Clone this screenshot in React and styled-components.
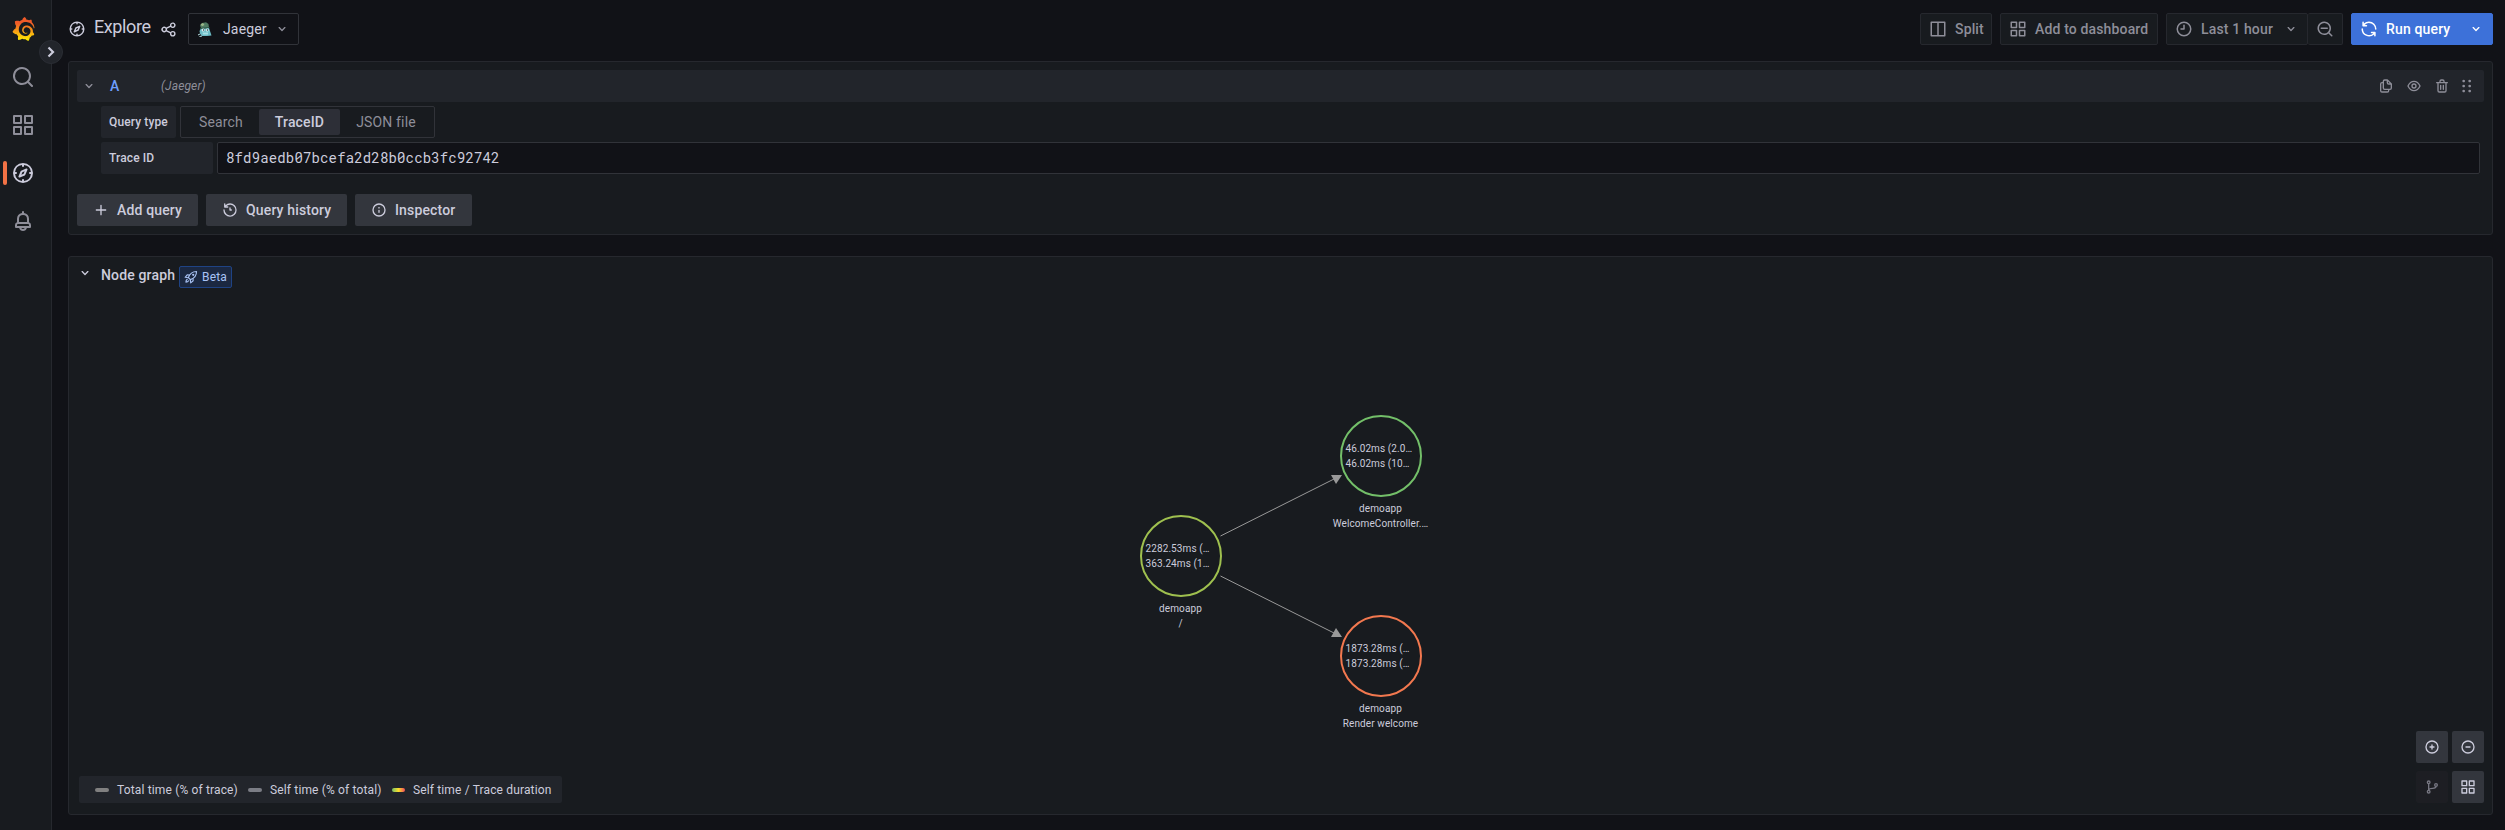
import React from "react";
import styled, { createGlobalStyle, css } from "styled-components";

const colors = {
  canvas: "#111217",
  primary: "#181b1f",
  secondary: "#22252b",
  border: "#26282e",
  strongBorder: "#313339",
  text: "#ccccdc",
  muted: "#8e8e99",
  button: "#33363d",
  blue: "#3d71d9",
};

const GlobalStyle = createGlobalStyle`
  *, *::before, *::after { box-sizing: border-box; }
  body {
    margin: 0;
    background: ${colors.canvas};
    color: ${colors.text};
    font-family: Roboto, "Liberation Sans", sans-serif;
    font-size: 14px;
    line-height: 22px;
    letter-spacing: 0.15px;
  }
  button { font: inherit; letter-spacing: inherit; color: inherit; margin: 0; }
`;

const CIRCLE = "M12,2A10,10,0,1,0,22,12,10,10,0,0,0,12,2Zm0,18a8,8,0,1,1,8-8A8,8,0,0,1,12,20Z";

const paths = {
  angleDown: "M17,9.17a1,1,0,0,0-1.41,0L12,12.71,8.46,9.17a1,1,0,0,0-1.41,0,1,1,0,0,0,0,1.42l4.24,4.24a1,1,0,0,0,1.42,0L17,10.59A1,1,0,0,0,17,9.17Z",
  plus: "M19,11H13V5a1,1,0,0,0-2,0v6H5a1,1,0,0,0,0,2h6v6a1,1,0,0,0,2,0V13h6a1,1,0,0,0,0-2Z",
  search: "M21.71,20.29,18,16.61A9,9,0,1,0,16.61,18l3.68,3.68a1,1,0,0,0,1.42,0A1,1,0,0,0,21.71,20.29ZM11,18a7,7,0,1,1,7-7A7,7,0,0,1,11,18Z",
  searchMinus: "M21.71,20.29,18,16.61A9,9,0,1,0,16.61,18l3.68,3.68a1,1,0,0,0,1.42,0A1,1,0,0,0,21.71,20.29ZM11,18a7,7,0,1,1,7-7A7,7,0,0,1,11,18Zm4-8H7a1,1,0,0,0,0,2h8a1,1,0,0,0,0-2Z",
  apps: "M10,13H3a1,1,0,0,0-1,1v7a1,1,0,0,0,1,1h7a1,1,0,0,0,1-1V14A1,1,0,0,0,10,13ZM9,20H4V15H9ZM21,2H14a1,1,0,0,0-1,1v7a1,1,0,0,0,1,1h7a1,1,0,0,0,1-1V3A1,1,0,0,0,21,2ZM20,9H15V4h5Zm1,4H14a1,1,0,0,0-1,1v7a1,1,0,0,0,1,1h7a1,1,0,0,0,1-1V14A1,1,0,0,0,21,13Zm-1,7H15V15h5ZM10,2H3A1,1,0,0,0,2,3v7a1,1,0,0,0,1,1h7a1,1,0,0,0,1-1V3A1,1,0,0,0,10,2ZM9,9H4V4H9Z",
  compass: "M12,2A10,10,0,1,0,22,12,10,10,0,0,0,12,2Zm1,17.93V19a1,1,0,0,0-2,0v.93A8,8,0,0,1,4.07,13H5a1,1,0,0,0,0-2H4.07A8,8,0,0,1,11,4.07V5a1,1,0,0,0,2,0V4.07A8,8,0,0,1,19.93,11H19a1,1,0,0,0,0,2h.93A8,8,0,0,1,13,19.93ZM15.14,7.55l-5,2.12a1,1,0,0,0-.52.52l-2.12,5a1,1,0,0,0,.21,1.1,1,1,0,0,0,.7.3.93.93,0,0,0,.4-.09l5-2.12a1,1,0,0,0,.52-.52l2.12-5a1,1,0,0,0-1.31-1.31Zm-2.49,5.1-2.28,1,1-2.28,2.28-1Z",
  bell: "M18,13.18V10a6,6,0,0,0-5-5.91V3a1,1,0,0,0-2,0V4.09A6,6,0,0,0,6,10v3.18A3,3,0,0,0,4,16v2a1,1,0,0,0,1,1H8.14a4,4,0,0,0,7.72,0H19a1,1,0,0,0,1-1V16A3,3,0,0,0,18,13.18ZM8,10a4,4,0,0,1,8,0v3H8Zm4,10a2,2,0,0,1-1.72-1h3.44A2,2,0,0,1,12,20Zm6-3H6V16a1,1,0,0,1,1-1H17a1,1,0,0,1,1,1Z",
  share: "M18,14a4,4,0,0,0-3.08,1.48l-5.1-2.35a3.64,3.64,0,0,0,0-2.26l5.1-2.35A4,4,0,1,0,14,6a4.17,4.17,0,0,0,.07.71L8.79,9.14a4,4,0,1,0,0,5.72l5.28,2.43A4.17,4.17,0,0,0,14,18a4,4,0,1,0,4-4ZM18,4a2,2,0,1,1-2,2A2,2,0,0,1,18,4ZM6,14a2,2,0,1,1,2-2A2,2,0,0,1,6,14Zm12,6a2,2,0,1,1,2-2A2,2,0,0,1,18,20Z",
  columns: "M21,2H3A1,1,0,0,0,2,3V21a1,1,0,0,0,1,1H21a1,1,0,0,0,1-1V3A1,1,0,0,0,21,2ZM11,20H4V4h7Zm9,0H13V4h7Z",
  clock: CIRCLE + "M12,6a1,1,0,0,0-1,1v4H8a1,1,0,0,0,0,2h4a1,1,0,0,0,1-1V7A1,1,0,0,0,12,6Z",
  sync: "M19.91,15.51H15.38a1,1,0,0,0,0,2h2.4A8,8,0,0,1,4,12a1,1,0,0,0-2,0,10,10,0,0,0,16.88,7.23V21a1,1,0,0,0,2,0V16.5A1,1,0,0,0,19.91,15.51ZM12,2A10,10,0,0,0,5.12,4.77V3a1,1,0,0,0-2,0V7.5a1,1,0,0,0,1,1h4.5a1,1,0,0,0,0-2H6.22A8,8,0,0,1,20,12a1,1,0,0,0,2,0A10,10,0,0,0,12,2Z",
  history: "M12,2A10,10,0,0,0,5.12,4.77V3a1,1,0,0,0-2,0V7.5a1,1,0,0,0,1,1H8.62a1,1,0,0,0,0-2H6.22A8,8,0,1,1,4,12a1,1,0,0,0-2,0A10,10,0,1,0,12,2Zm0,6a1,1,0,0,0-1,1v3a1,1,0,0,0,1,1h2a1,1,0,0,0,0-2H13V9A1,1,0,0,0,12,8Z",
  info: CIRCLE + "M12,11.5a1,1,0,0,0-1,1v3a1,1,0,0,0,2,0v-3A1,1,0,0,0,12,11.5Zm0-4a1.25,1.25,0,1,0,1.25,1.25A1.25,1.25,0,0,0,12,7.5Z",
  copy: "M21,8.94a1.31,1.31,0,0,0-.06-.27l0-.09a1.07,1.07,0,0,0-.19-.28h0l-6-6h0a1.07,1.07,0,0,0-.28-.19.32.32,0,0,0-.09,0A.88.88,0,0,0,14.05,2H10A3,3,0,0,0,7,5V6H6A3,3,0,0,0,3,9V19a3,3,0,0,0,3,3h8a3,3,0,0,0,3-3V18h1a3,3,0,0,0,3-3V9S21,9,21,8.94ZM15,5.41,17.59,8H16a1,1,0,0,1-1-1ZM15,19a1,1,0,0,1-1,1H6a1,1,0,0,1-1-1V9A1,1,0,0,1,6,8H7v7a3,3,0,0,0,3,3h5Zm4-4a1,1,0,0,1-1,1H10a1,1,0,0,1-1-1V5a1,1,0,0,1,1-1h3V7a3,3,0,0,0,3,3h3Z",
  eye: "M21.92,11.6C19.9,6.91,16.1,4,12,4S4.1,6.91,2.08,11.6a1,1,0,0,0,0,.8C4.1,17.09,7.9,20,12,20s7.9-2.91,9.92-7.6A1,1,0,0,0,21.92,11.6ZM12,18c-3.17,0-6.17-2.29-7.9-6C5.83,8.29,8.83,6,12,6s6.17,2.29,7.9,6C18.17,15.71,15.17,18,12,18ZM12,8a4,4,0,1,0,4,4A4,4,0,0,0,12,8Zm0,6a2,2,0,1,1,2-2A2,2,0,0,1,12,14Z",
  trash: "M10,18a1,1,0,0,0,1-1V11a1,1,0,0,0-2,0v6A1,1,0,0,0,10,18ZM20,6H16V5a3,3,0,0,0-3-3H11A3,3,0,0,0,8,5V6H4A1,1,0,0,0,4,8H5V19a3,3,0,0,0,3,3h8a3,3,0,0,0,3-3V8h1a1,1,0,0,0,0-2ZM10,5a1,1,0,0,1,1-1h2a1,1,0,0,1,1,1V6H10Zm7,14a1,1,0,0,1-1,1H8a1,1,0,0,1-1-1V8H17Zm-3-1a1,1,0,0,0,1-1V11a1,1,0,0,0-2,0v6A1,1,0,0,0,14,18Z",
  plusCircle: CIRCLE + "M15,11H13V9a1,1,0,0,0-2,0v2H9a1,1,0,0,0,0,2h2v2a1,1,0,0,0,2,0V13h2a1,1,0,0,0,0-2Z",
  minusCircle: CIRCLE + "M15,11H9a1,1,0,0,0,0,2h6a1,1,0,0,0,0-2Z",
  dots: "M7,2.500a2,2,0,1,0,.01,0ZM16,2.500a2,2,0,1,0,.01,0ZM7,10a2,2,0,1,0,.01,0ZM16,10a2,2,0,1,0,.01,0ZM7,17.500a2,2,0,1,0,.01,0ZM16,17.500a2,2,0,1,0,.01,0Z",
};

const Svg = styled.svg`
  display: block;
  flex: none;
  fill: currentColor;
`;

const Icon = ({ name, size = 16 }) => (
  <Svg width={size} height={size} viewBox="0 0 24 24">
    <path d={paths[name]} />
  </Svg>
);

const RocketIcon = () => (
  <Svg width="14" height="14" viewBox="0 0 24 24">
    <g fill="none" stroke="currentColor" strokeWidth="1.900" strokeLinejoin="round" strokeLinecap="round">
      <path d="M7.500 13C9.500 7 14 2.500 21.500 2.500c0 7.500-4.500 12-10.500 14z" />
      <path d="M9 8.500 5.500 8.300 2 12.500l5.500.7M15.500 15l.2 3.500L11.500 22l-.700-5.500" />
      <path d="M5.500 16c-1.500 1-2.200 3-2.200 4.700 1.700 0 3.700-.7 4.700-2.200" />
      <circle cx="15.800" cy="8.200" r="1" />
    </g>
  </Svg>
);

const BranchIcon = () => (
  <Svg width="16" height="16" viewBox="0 0 24 24">
    <g fill="none" stroke="currentColor" strokeWidth="2">
      <circle cx="7" cy="5" r="2" />
      <circle cx="7" cy="19" r="2" />
      <circle cx="18" cy="9" r="2" />
      <path d="M7 7v10M18 11c0 3-2 3-5 3-3 0-6 0-6 3" />
    </g>
  </Svg>
);

const GrafanaLogo = () => (
  <Svg width="23" height="24" viewBox="0 0 351 365">
    <defs>
      <linearGradient id="flame" x1="175" y1="365" x2="175" y2="90" gradientUnits="userSpaceOnUse">
        <stop offset="0" stopColor="#FFF100" />
        <stop offset="1" stopColor="#F05A28" />
      </linearGradient>
    </defs>
    <path
      fill="url(#flame)"
      d="M342,161.2c-0.6-6.1-1.6-13.1-3.6-20.9c-2-7.7-5-16.2-9.4-25c-4.4-8.8-10.1-17.9-17.5-26.8c-2.9-3.5-6.1-6.9-9.5-10.2c5.1-20.3-6.2-37.9-6.2-37.9c-19.5-1.2-31.9,6.1-36.5,9.4c-0.8-0.3-1.5-0.7-2.3-1c-3.3-1.3-6.7-2.6-10.3-3.7c-3.5-1.1-7.1-2.1-10.8-3c-3.7-0.9-7.4-1.6-11.2-2.2c-0.7-0.1-1.3-0.2-2-0.3c-8.5-27.2-32.9-38.6-32.9-38.6c-27.3,17.3-32.4,41.5-32.4,41.5s-0.1,0.5-0.3,1.4c-1.5,0.4-3,0.9-4.5,1.3c-2.1,0.6-4.2,1.4-6.2,2.2c-2.1,0.8-4.1,1.6-6.2,2.5c-4.1,1.8-8.2,3.8-12.2,6c-3.9,2.2-7.7,4.6-11.4,7.1c-0.5-0.2-1-0.4-1-0.4c-37.8-14.4-71.3,2.9-71.3,2.9c-3.1,40.2,15.1,65.5,18.7,70.1c-0.9,2.5-1.7,5-2.5,7.5c-2.8,9.1-4.9,18.4-6.2,28.1c-0.2,1.4-0.4,2.8-0.5,4.2C18.8,192.7,8.5,228,8.5,228c29.1,33.5,63.1,35.6,63.1,35.6c0,0,0.1-0.1,0.1-0.1c4.3,7.7,9.3,15,14.9,21.9c2.4,2.9,4.8,5.6,7.4,8.3c-10.6,30.4,1.5,55.6,1.5,55.6c32.4,1.2,53.7-14.2,58.2-17.7c3.2,1.1,6.5,2.1,9.8,2.9c10,2.6,20.2,4.1,30.4,4.5c2.5,0.1,5.1,0.2,7.6,0.1l5.2-0.1l0,0.1c15.3,21.8,42.1,24.9,42.1,24.9c19.1-20.1,20.2-40.1,20.2-44.4l0-1.8c4-2.8,7.8-5.8,11.4-9.1c7.6-6.9,14.3-14.8,19.9-23.3c0.5-0.8,1-1.6,1.5-2.4c21.6,1.2,36.9-13.4,36.9-13.4c-3.6-22.5-16.4-33.5-19.1-35.6l-1-0.700c0.1-1.4,0.2-2.7,0.3-4.1c0.2-2.4,0.2-4.9,0.2-7.3l0-3.800l-0.2-3.500c-0.1-2.500-0.4-5-0.9-7.600c-0.4-2.5-0.8-4.9-1.4-7.4c-2.3-9.7-6.1-18.9-11-27.2c-5-8.3-11.2-15.6-18.3-21.8c-7-6.2-14.9-11.2-23.1-14.9c-8.3-3.7-16.9-6.1-25.5-7.2c-4.3-0.6-8.6-0.8-12.9-0.7l-4.8,0.100c-2.8,0.100-5.500,0.500-8.2,1c-8.6,1.6-16.7,4.7-23.8,9c-7.1,4.3-13.3,9.6-18.3,15.6c-5,6-8.9,12.7-11.6,19.6c-2.7,6.9-4.2,14.1-4.6,21c-0.1,1.7-0.1,3.5-0.1,5.2l0.100,2.700c0.1,0.8,0.1,1.7,0.2,2.5c0.3,3.5,1,6.9,1.9,10.1c1.9,6.5,4.9,12.4,8.6,17.4c3.7,5,8.2,9.1,12.9,12.4c4.7,3.2,9.8,5.5,14.8,7c5,1.5,10,2.1,14.7,2.1c5.100,0,10.200-0.700,15-2.300c2-0.7,4-1.5,5.7-2.4c1.8-0.9,3.4-2,5-3c0.4-0.3,0.9-0.6,1.3-1c1.6-1.3,1.9-3.7,0.6-5.3c-1.1-1.4-3.1-1.8-4.7-0.9c-1.8,0.9-3.6,1.7-5.500,2.400c-3.500,1-6.500,1.600-9.700,1.600c-5,0-10-1-15.600-3.600c-3.6-1.6-7-3.8-10.1-6.6c-3.1-2.8-5.8-6.1-7.9-9.9c-2.1-3.8-3.6-8-4.3-12.4c-0.3-2.2-0.5-4.5-0.4-6.7c0-2.500,0.300-4.800,0.700-7.100c1.7-9.6,6.5-19,13.9-26.1c1.9-1.8,3.9-3.4,6-4.9c2.1-1.5,4.4-2.8,6.8-3.9c2.4-1.1,4.8-2,7.4-2.7c2.5-0.7,5.1-1.1,7.8-1.4c2.500-0.200,4.800-0.200,7.200-0.100c2.9,0.2,5.7,0.6,8.5,1.3c5.6,1.2,11.1,3.3,16.2,6.1c10.2,5.7,18.9,14.5,24.2,25.1c2.7,5.3,4.6,11,5.5,16.9c0.600,4,0.800,8,0.700,12.500c-0.1,1.6-0.3,3.3-0.5,4.9c-0.800,5-2.300,12-4.9,18.800c-2.4,6-5.6,11.8-9.4,17.1c-7.7,10.6-18.2,19.2-30.2,24.7c-6,2.7-12.3,4.7-18.8,5.7c-6,1-13,1.300-20,0.700c-7-0.5-13.9-1.8-20.7-3.7c-6.7-1.9-13.2-4.6-19.4-7.8c-12.3-6.6-23.4-15.6-32-26.5c-4.3-5.4-8.1-11.3-11.2-17.4c-3.1-6.1-5.6-12.6-7.4-19.1c-1.8-6.6-2.9-13.3-3.4-20.1c-0.400-6.500-0.300-13.500,0.700-20.500c0.4-3.4,1-6.9,1.7-10.3c0.7-3.4,1.5-6.8,2.5-10.2c1.9-6.7,4.3-13.2,7.1-19.3c5.7-12.2,13.1-23.1,22-31.8c2.2-2.2,4.5-4.2,6.9-6.2c2.4-1.9,4.9-3.7,7.5-5.4c2.5-1.7,5.2-3.2,7.9-4.6c6-3.100,11.500-5.200,17-6.900c12-3.500,22-5,32-5.500c9-0.400,17,0,26.800,1.900c11.1,2.1,21.5,5.6,31,10.3c9.5,4.6,17.9,10.3,25.3,16.5c6,5.200,11.500,10.500,16.500,16.300c5.2,6.7,9.4,13.5,12.7,19.9c3,6,5.600,11.500,7.700,18c1.5,4.4,2.6,8.3,3.5,11.7c0.3,1.4,1.6,2.3,3,2.1c1.5-0.1,2.6-1.3,2.6-2.8C342.6,170.4,342.5,166.1,342,161.2z"
    />
  </Svg>
);

const JaegerLogo = () => (
  <Svg width="14" height="15" viewBox="0 0 14 15">
    <path d="M1.500 9Q2.500 6.500 4 6L11 6 12 9 13.500 13.500 9 14H4Q1.500 12.500 1.500 9Z" fill="#6cbcc6" />
    <path d="M2 3.500 4 1 8 0.300 10.500 2 11 5.500 8 6.500 3 6.200Z" fill="#4f7a62" />
    <path d="M2.500 2.200 5 1 6.500 3 4 4.200Z" fill="#9cb789" />
    <path d="M2 6.500 11.500 5.500" stroke="#2c5547" strokeWidth="1" />
    <circle cx="5.200" cy="8" r="1.500" fill="#e6f7f8" />
    <circle cx="9.200" cy="8" r="1.500" fill="#e6f7f8" />
    <circle cx="5.500" cy="8" r=".7" fill="#1c3238" />
    <circle cx="9.400" cy="8" r=".7" fill="#1c3238" />
    <path d="M4.500 10.500H10V12.500H5Z" fill="#a5dfe4" />
    <path d="M0 13 2 12M1.500 14.500 4 14" stroke="#b9e4e8" strokeWidth="1" />
  </Svg>
);

const Page = styled.div`
  display: flex;
  height: 830px;
`;

const Sidebar = styled.nav`
  position: relative;
  display: flex;
  flex-direction: column;
  width: 52px;
  flex: none;
  padding-top: 5px;
  background: ${colors.primary};
  border-right: 1px solid ${colors.border};
`;

const SidebarItem = styled.a`
  position: relative;
  display: flex;
  align-items: center;
  justify-content: center;
  width: 46px;
  height: 48px;
  color: ${(p) => (p.$active ? colors.text : colors.muted)};
  ${(p) =>
    p.$active &&
    css`
      &::before {
        content: "";
        position: absolute;
        left: 3px;
        top: 12px;
        width: 4px;
        height: 24px;
        border-radius: 2px;
        background: #f27245;
      }
    `}
`;

const SidebarToggle = styled.button`
  position: absolute;
  left: 39px;
  top: 40px;
  display: flex;
  align-items: center;
  justify-content: center;
  width: 24px;
  height: 24px;
  padding: 0;
  border: 1px solid #2a2d34;
  border-radius: 50%;
  background: ${colors.secondary};
  color: ${colors.text};
  z-index: 1;
`;

const Main = styled.main`
  flex: 1;
  min-width: 0;
  display: flex;
  flex-direction: column;
  padding: 0 12px 15px 16px;
`;

const Toolbar = styled.header`
  display: flex;
  align-items: flex-start;
  height: 61px;
  flex: none;
  padding-top: 13px;
`;

const Title = styled.h1`
  display: flex;
  align-items: center;
  height: 32px;
  width: 120px;
  margin: 0;
  font-size: 18px;
  font-weight: 400;
  letter-spacing: -0.4px;
`;

const TitleText = styled.span`
  width: 66px;
  padding: 0 0 5px 8px;
`;

const TitleShare = styled.span`
  padding-left: 8px;
`;

const Picker = styled.button`
  display: flex;
  align-items: center;
  width: 111px;
  height: 32px;
  padding: 0 8px 0 9px;
  border: 1px solid ${colors.strongBorder};
  border-radius: 2px;
  background: ${colors.canvas};
`;

const PickerLabel = styled.span`
  flex: 1;
  padding-left: 11px;
  text-align: left;
`;

const PickerArrow = styled.span`
  color: ${colors.muted};
`;

const Actions = styled.div`
  display: flex;
  gap: 8px;
  margin-left: auto;
`;

const ButtonGroup = styled.div`
  display: flex;
`;

const ToolbarButton = styled.button`
  display: flex;
  align-items: center;
  gap: 8px;
  width: ${(p) => p.$width}px;
  height: 32px;
  padding: 0 8px;
  border: 1px solid ${(p) => (p.$primary ? colors.blue : colors.border)};
  border-radius: 2px;
  background: ${(p) => (p.$primary ? colors.blue : colors.primary)};
  color: ${(p) => (p.$primary ? "#fff" : colors.muted)};
  font-weight: 500;
  white-space: nowrap;
  ${(p) => p.$joined && "border-left: 0;"}
  & > svg:last-child:not(:first-child) { margin-left: auto; }
`;

const Panel = styled.section`
  position: relative;
  height: ${(p) => p.$height}px;
  flex: none;
  padding: 8px;
  border: 1px solid ${colors.border};
  border-radius: 3px;
  background: ${colors.primary};
`;

const NodePanel = styled(Panel)`
  margin-top: 21px;
  display: flex;
  flex-direction: column;
  justify-content: space-between;
  padding: 9px 8px 11px 10px;
`;

const QueryHeader = styled.div`
  display: flex;
  align-items: center;
  height: 32px;
  padding: 0 9px 0 4px;
  border-radius: 2px;
  background: ${colors.secondary};
  color: ${colors.muted};
`;

const RefId = styled.span`
  width: 64px;
  padding-left: 13px;
  color: #6e9fff;
  font-weight: 500;
`;

const SourceName = styled.em`
  font-size: 12px;
  letter-spacing: 0.13px;
`;

const QueryActions = styled.div`
  display: flex;
  align-items: center;
  gap: 12px;
  margin-left: auto;
  & > svg:last-child { margin-left: -3px; }
`;

const FieldRow = styled.div`
  display: flex;
  gap: 4px;
  margin-top: 4px;
  padding: 0 4px 0 24px;
`;

const FieldLabel = styled.label`
  display: flex;
  align-items: center;
  flex: none;
  width: ${(p) => p.$width}px;
  height: 32px;
  padding: 0 0 0 8px;
  border-radius: 2px;
  background: ${colors.secondary};
  font-size: 12px;
  font-weight: 500;
  letter-spacing: 0.12px;
  white-space: nowrap;
`;

const RadioGroup = styled.div`
  display: flex;
  width: 255px;
  height: 32px;
  padding: 2px;
  border: 1px solid ${colors.strongBorder};
  border-radius: 2px;
`;

const Radio = styled.div`
  display: flex;
  align-items: center;
  justify-content: center;
  flex: ${(p) => p.$grow};
  border-radius: 2px;
  color: ${(p) => (p.$active ? colors.text : colors.muted)};
  background: ${(p) => (p.$active ? "#2d2f37" : "transparent")};
  font-weight: ${(p) => (p.$active ? 500 : 400)};
`;

const Input = styled.div`
  display: flex;
  align-items: center;
  flex: 1;
  height: 32px;
  padding: 0 8px;
  border: 1px solid ${colors.strongBorder};
  border-radius: 2px;
  background: ${colors.canvas};
  font-family: "Roboto Mono", "DejaVu Sans Mono", monospace;
  font-size: 14px;
  letter-spacing: 0.15px;
`;

const ButtonRow = styled.div`
  display: flex;
  gap: 8px;
  margin-top: 20px;
`;

const SecondaryButton = styled.button`
  display: flex;
  align-items: center;
  gap: 8px;
  width: ${(p) => p.$width}px;
  height: 32px;
  padding: 0 16px;
  border: 0;
  border-radius: 2px;
  background: ${colors.button};
  font-weight: 500;
  white-space: nowrap;
`;

const PanelTitle = styled.div`
  position: relative;
  display: flex;
  height: 22px;
  align-items: flex-start;
  & > svg { margin: -1px 8px 0 -2px; }
`;

const PanelName = styled.span`
  width: 78px;
  line-height: 19px;
  font-weight: 500;
`;

const Badge = styled.span`
  display: flex;
  align-items: center;
  gap: 4px;
  width: 53px;
  height: 22px;
  padding: 0 4px;
  border: 1px solid #1f4384;
  border-radius: 2px;
  background: #1b2841;
  color: #a9c3f5;
  font-size: 12px;
`;

const GraphCanvas = styled.div`
  position: absolute;
  inset: 0;
`;

const Edges = styled.svg`
  position: absolute;
  left: 0;
  top: 0;
`;

const Node = styled.div`
  position: absolute;
  left: ${(p) => p.$x - 60}px;
  top: ${(p) => p.$y - 41}px;
  width: 120px;
  display: flex;
  flex-direction: column;
  align-items: center;
  font-size: 10px;
  line-height: 15px;
  letter-spacing: 0.1px;
  text-align: center;
  white-space: nowrap;
`;

const NodeCircle = styled.div`
  display: flex;
  flex-direction: column;
  justify-content: center;
  width: 82px;
  height: 82px;
  margin-bottom: 4px;
  padding-left: 4px;
  border: 2px solid ${(p) => p.$color};
  border-radius: 50%;
  text-align: left;
`;

const Footer = styled.div`
  display: flex;
  align-items: flex-end;
  justify-content: space-between;
  position: relative;
`;

const Legend = styled.div`
  display: flex;
  align-items: center;
  width: 483px;
  height: 27px;
  padding-left: 16px;
  border-radius: 2px;
  background: ${colors.secondary};
  font-size: 12px;
`;

const LegendItem = styled.div`
  display: flex;
  align-items: center;
  gap: 8px;
  width: ${(p) => p.$width}px;
  white-space: nowrap;
`;

const Swatch = styled.span`
  width: 14px;
  height: 4px;
  border-radius: 2px;
  background: ${(p) => p.$fill};
`;

const Controls = styled.div`
  display: grid;
  grid-template-columns: 32px 32px;
  column-gap: 4px;
  row-gap: 8px;
`;

const ControlButton = styled.button`
  display: flex;
  align-items: center;
  justify-content: center;
  width: 32px;
  height: 32px;
  padding: 0;
  border: 0;
  border-radius: 2px;
  background: ${(p) => (p.$disabled ? "#1d1e23" : colors.button)};
  color: ${(p) => (p.$disabled ? "#777782" : colors.text)};
`;

const nodes = [
  { x: 1111.5, y: 299, color: "#9fc04f", stats: ["2282.53ms (…", "363.24ms (1…"], title: "demoapp", subtitle: "/" },
  { x: 1311.5, y: 199, color: "#73bf69", stats: ["46.02ms (2.0…", "46.02ms (10…"], title: "demoapp", subtitle: "WelcomeController.…" },
  { x: 1311.5, y: 399, color: "#f2784f", stats: ["1873.28ms (…", "1873.28ms (…"], title: "demoapp", subtitle: "Render welcome" },
];

export default function App() {
  return (
    <Page>
      <GlobalStyle />
      <Sidebar>
        <SidebarItem><GrafanaLogo /></SidebarItem>
        <SidebarItem><Icon name="search" size={24} /></SidebarItem>
        <SidebarItem><Icon name="apps" size={24} /></SidebarItem>
        <SidebarItem $active><Icon name="compass" size={24} /></SidebarItem>
        <SidebarItem><Icon name="bell" size={24} /></SidebarItem>
        <SidebarToggle>
          <Svg width="12" height="12" viewBox="0 0 12 12">
            <path d="M3.500 1.500 8 6 3.500 10.500" fill="none" stroke="currentColor" strokeWidth="2.200" />
          </Svg>
        </SidebarToggle>
      </Sidebar>
      <Main>
        <Toolbar>
          <Title>
            <Icon name="compass" size={18} />
            <TitleText>Explore</TitleText>
            <TitleShare><Icon name="share" size={17} /></TitleShare>
          </Title>
          <Picker>
            <JaegerLogo />
            <PickerLabel>Jaeger</PickerLabel>
            <PickerArrow><Icon name="angleDown" /></PickerArrow>
          </Picker>
          <Actions>
            <ToolbarButton $width={72}><Icon name="columns" size={18} />Split</ToolbarButton>
            <ToolbarButton $width={158}><Icon name="apps" size={18} />Add to dashboard</ToolbarButton>
            <ButtonGroup>
              <ToolbarButton $width={142}>
                <Icon name="clock" size={18} />Last 1 hour<Icon name="angleDown" />
              </ToolbarButton>
              <ToolbarButton $width={35} $joined><Icon name="searchMinus" size={18} /></ToolbarButton>
            </ButtonGroup>
            <ToolbarButton $width={142} $primary>
              <Icon name="sync" size={18} />Run query<Icon name="angleDown" />
            </ToolbarButton>
          </Actions>
        </Toolbar>

        <Panel $height={174}>
          <QueryHeader>
            <Icon name="angleDown" />
            <RefId>A</RefId>
            <SourceName>(Jaeger)</SourceName>
            <QueryActions>
              <Icon name="copy" />
              <Icon name="eye" />
              <Icon name="trash" />
              <Icon name="dots" />
            </QueryActions>
          </QueryHeader>
          <FieldRow>
            <FieldLabel $width={75}>Query type</FieldLabel>
            <RadioGroup>
              <Radio $grow={76}>Search</Radio>
              <Radio $grow={81} $active>TraceID</Radio>
              <Radio $grow={92}>JSON file</Radio>
            </RadioGroup>
          </FieldRow>
          <FieldRow>
            <FieldLabel $width={112}>Trace ID</FieldLabel>
            <Input>8fd9aedb07bcefa2d28b0ccb3fc92742</Input>
          </FieldRow>
          <ButtonRow>
            <SecondaryButton $width={121}><Icon name="plus" />Add query</SecondaryButton>
            <SecondaryButton $width={141}><Icon name="history" />Query history</SecondaryButton>
            <SecondaryButton $width={117}><Icon name="info" />Inspector</SecondaryButton>
          </ButtonRow>
        </Panel>

        <NodePanel $height={559}>
          <GraphCanvas>
            <Edges width="2423" height="557" viewBox="0 0 2423 557">
              <g stroke="#999" strokeWidth="1">
                <path d="M1151.500 279 1268 220.500M1151.500 319 1268 377.500" />
              </g>
              <g fill="#999">
                <path d="M1273 218 1262 218 1267 227Z" />
                <path d="M1273 380 1262 380 1267 371Z" />
              </g>
            </Edges>
            {nodes.map((node) => (
              <Node key={node.subtitle} $x={node.x} $y={node.y}>
                <NodeCircle $color={node.color}>
                  {node.stats.map((stat, i) => <span key={i}>{stat}</span>)}
                </NodeCircle>
                <span>{node.title}</span>
                <span>{node.subtitle}</span>
              </Node>
            ))}
          </GraphCanvas>
          <PanelTitle>
            <Icon name="angleDown" />
            <PanelName>Node graph</PanelName>
            <Badge><RocketIcon />Beta</Badge>
          </PanelTitle>
          <Footer>
            <Legend>
              <LegendItem $width={153}><Swatch $fill="#808080" />Total time (% of trace)</LegendItem>
              <LegendItem $width={143.5}><Swatch $fill="#7b7d85" />Self time (% of total)</LegendItem>
              <LegendItem $width={160}>
                <Swatch $fill="linear-gradient(90deg, #73bf69, #fade2a 50%, #f2495c)" />Self time / Trace duration
              </LegendItem>
            </Legend>
            <Controls>
              <ControlButton><Icon name="plusCircle" /></ControlButton>
              <ControlButton><Icon name="minusCircle" /></ControlButton>
              <ControlButton $disabled><BranchIcon /></ControlButton>
              <ControlButton><Icon name="apps" /></ControlButton>
            </Controls>
          </Footer>
        </NodePanel>
      </Main>
    </Page>
  );
}
